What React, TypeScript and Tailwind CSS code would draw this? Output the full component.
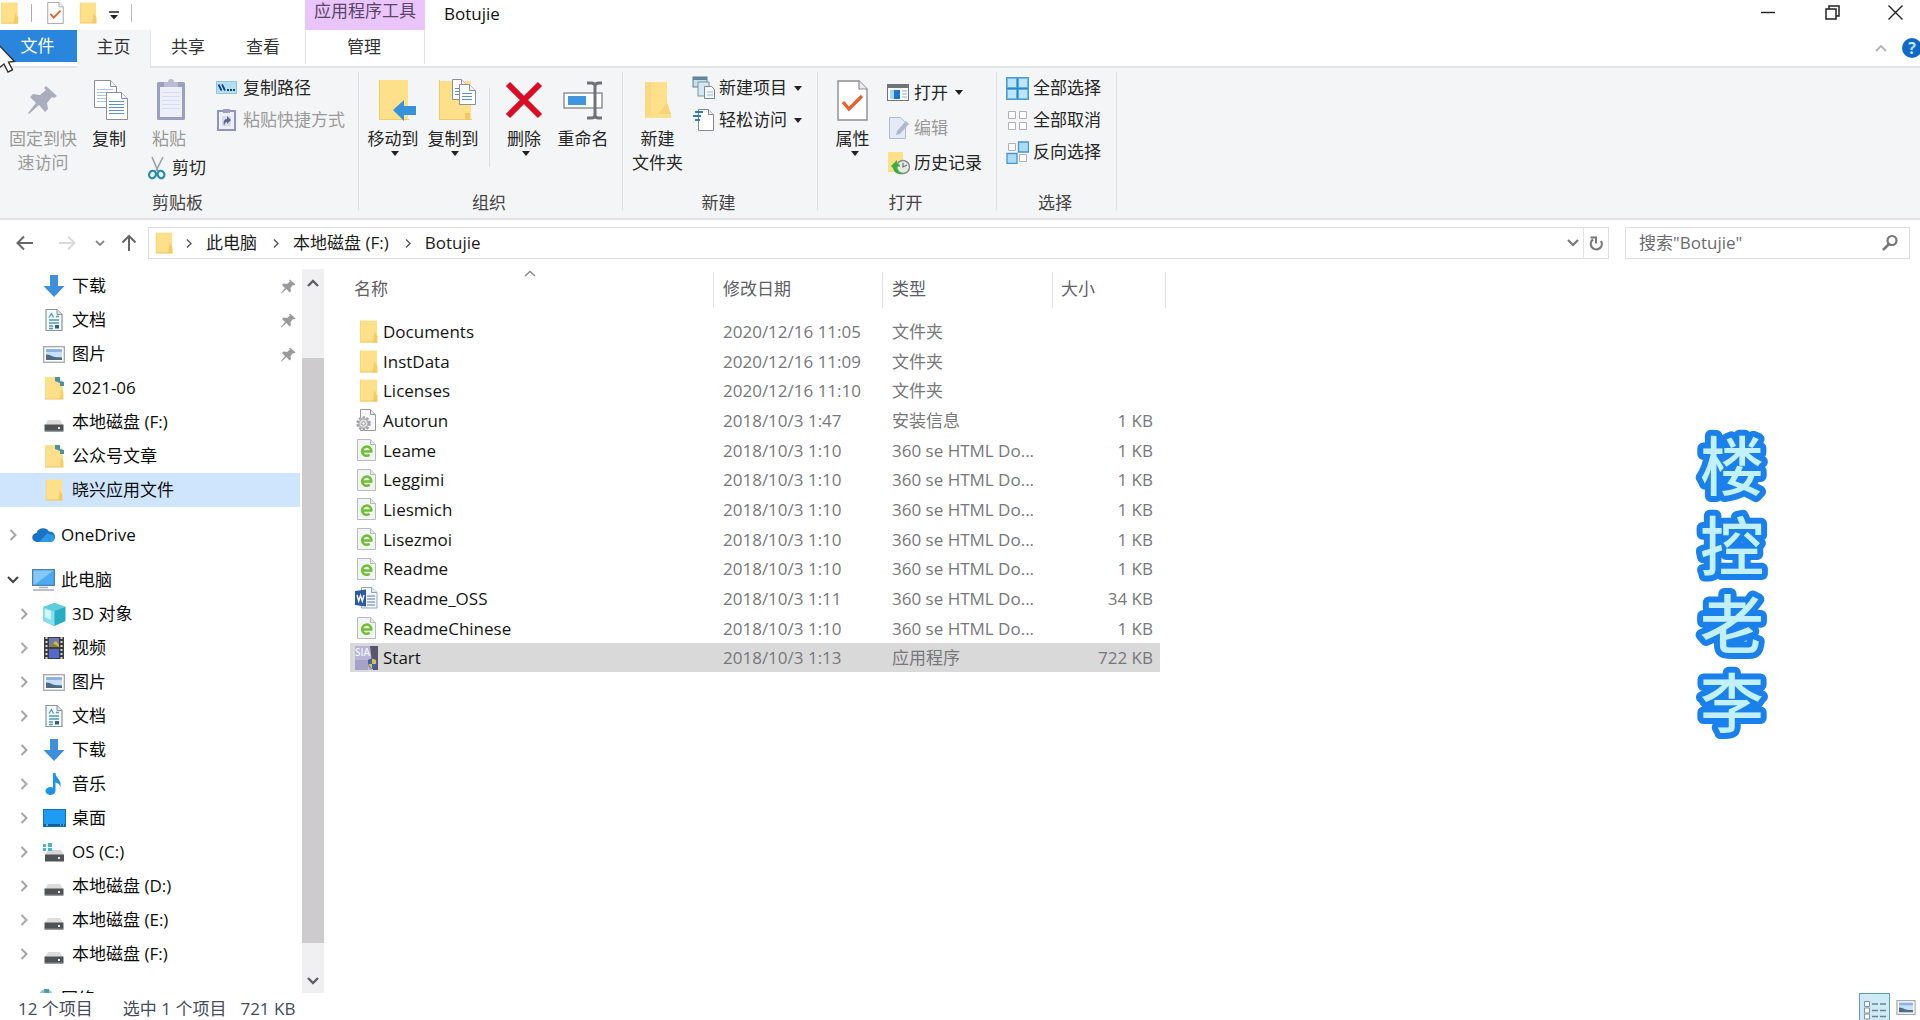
import React from "react";

type IconProps = { className?: string };

/* ---------- shared icons ---------- */

function Folder({ className = "w-5 h-6" }: IconProps) {
  return (
    <svg viewBox="0 0 20 24" className={className} aria-hidden="true">
      <path d="M1 0.5h18v13l0 10H1z" fill="#ffe08a" />
      <path d="M16 12l3.4 5v6.5H14.5z" fill="#f6cc62" />
      <path d="M1 23h18.4" stroke="#ecc35c" strokeWidth="1" />
      <path d="M1.5 0.5v23" stroke="#f7d47a" strokeWidth="1" />
    </svg>
  );
}

function FolderDoc() {
  return (
    <svg viewBox="0 0 20 24" className="w-5 h-6" aria-hidden="true">
      <path d="M1 1h11l7 9v13H1z" fill="#ffe08a" />
      <path d="M1 23h18.4" stroke="#ecc35c" />
      <path d="M17 13l2.4 4v6H16z" fill="#f6cc62" />
      <path d="M11 1h4l4 4v5z" fill="#dce9f0" />
      <path d="M11 1h5v4l4 1v4h-4V7l-5-2z" fill="#4f8fa3" />
    </svg>
  );
}

function CheckDoc({ className = "w-[31px] h-[41px]" }: IconProps) {
  return (
    <svg viewBox="0 0 31 41" className={className} aria-hidden="true">
      <path d="M1 1h21l8 8v31H1z" fill="#fff" stroke="#8d8d92" strokeWidth="1.4" />
      <path d="M22 1v8h8" fill="#eee" stroke="#8d8d92" strokeWidth="1.2" />
      <path d="M6 22l6 7L25 16" fill="none" stroke="#e8622c" strokeWidth="3.4" />
    </svg>
  );
}

function Caret() {
  return (
    <svg viewBox="0 0 8 5" className="w-2 h-[5px] shrink-0" aria-hidden="true">
      <path d="M0 0h8L4 5z" fill="#222" />
    </svg>
  );
}

function Pin({ className = "w-[15px] h-[15px]", color = "#9a9a9e" }: IconProps & { color?: string }) {
  return (
    <svg viewBox="0 0 30 30" className={className} aria-hidden="true">
      <path d="M18 1l11 10-3 2-2-1-5 6 1 6-3 3-6-7-10 9-1-1 8-10-6-6 3-3 7 1 6-5-2-2z" fill={color} />
    </svg>
  );
}

function Chevron({ open = false }: { open?: boolean }) {
  return open ? (
    <svg viewBox="0 0 12 8" className="w-3 h-2" aria-hidden="true">
      <path d="M1 1l5 5 5-5" fill="none" stroke="#444" strokeWidth="2.2" />
    </svg>
  ) : (
    <svg viewBox="0 0 8 12" className="w-2 h-3" aria-hidden="true">
      <path d="M1.5 1l5 5-5 5" fill="none" stroke="#a6a6a8" strokeWidth="2" />
    </svg>
  );
}

/* ---------- ribbon icons ---------- */

function Sheet({ x, y, w = 20, h = 26, line = "#5b8fd0" }: { x: number; y: number; w?: number; h?: number; line?: string }) {
  const rows = [9, 12, 15, 18, 21];
  return (
    <g transform={`translate(${x} ${y})`}>
      <path d={`M.5 .5h${w - 6}l6 6v${h - 7}h-${w}z`} fill="#fff" stroke="#8a8f9a" />
      <path d={`M${w - 5.5} .5v6h6`} fill="#eef" stroke="#8a8f9a" />
      {rows.filter((r) => r < h - 3).map((r) => (
        <path key={r} d={`M3 ${r}.5h${w - 6}`} stroke={line} />
      ))}
    </g>
  );
}

function CopyIcon() {
  return (
    <svg viewBox="0 0 36 42" className="ml-[3px] w-9 h-[42px]" aria-hidden="true">
      <Sheet x={1} y={1} w={22} h={28} line="#a9c4e6" />
      <Sheet x={13} y={13} w={21} h={28} />
    </svg>
  );
}

function PasteIcon() {
  return (
    <svg viewBox="0 0 30 42" className="ml-[3px] w-[30px] h-[42px]" aria-hidden="true">
      <rect x="1" y="3" width="28" height="38" rx="1.5" fill="#9c9fc0" />
      <rect x="4" y="8" width="22" height="30" fill="#edf0fb" />
      <path d="M8 3h4a3 3 0 016 0h4v5H8z" fill="#b9bcd2" />
      <path d="M6 13.500h18M6 17.500h18M6 21.500h18M6 25.500h18M6 29.500h18" stroke="#d5dcf3" />
    </svg>
  );
}

function CutIcon() {
  return (
    <svg viewBox="0 0 18 24" className="w-[18px] h-6" aria-hidden="true">
      <path d="M4 1l6 14M15 1L8 15" stroke="#9b9ea3" strokeWidth="1.600" fill="none" />
      <ellipse cx="4.500" cy="18.500" rx="3.300" ry="3.800" fill="#e9f6fb" stroke="#2589ad" strokeWidth="2.200" transform="rotate(25 4.500 18.500)" />
      <ellipse cx="13" cy="18.500" rx="3.300" ry="3.800" fill="#e9f6fb" stroke="#2589ad" strokeWidth="2.200" transform="rotate(-25 13 18.500)" />
    </svg>
  );
}

function PathIcon() {
  return (
    <svg viewBox="0 0 22 14" className="w-[22px] h-[14px]" aria-hidden="true">
      <rect x="0.500" y="0.500" width="20" height="12" fill="#b5def3" stroke="#8fc6e4" />
      <path d="M2.500 3.500l3 6M6 3.500l3 6" stroke="#16466b" strokeWidth="1.800" />
      <path d="M11 9h2M14 9h2M17 9h2" stroke="#16466b" strokeWidth="1.800" />
    </svg>
  );
}

function PasteLinkIcon() {
  return (
    <svg viewBox="0 0 22 24" className="w-[22px] h-6" aria-hidden="true">
      <rect x="2" y="3" width="17" height="19" fill="#eef0fb" stroke="#9194b8" strokeWidth="2" />
      <rect x="7" y="1" width="7" height="4" fill="#9da0bd" />
      <rect x="6" y="8" width="9" height="10" fill="#d9dcf0" />
      <path d="M8 18c-1-5 0-7 3-7V8l4 4-4 4v-2c-2 0-2 1-3 4z" fill="#62668f" />
    </svg>
  );
}

function MoveToIcon() {
  return (
    <svg viewBox="0 0 38 42" className="ml-2 w-[38px] h-[42px]" aria-hidden="true">
      <path d="M1 1h29v40H1z" fill="#ffe08a" />
      <path d="M1 40.500h30M1.500 1v40" stroke="#efcb6a" />
      <path d="M15 31l11-10v6h12v9H26v6z" fill="#3792dc" />
    </svg>
  );
}

function CopyToIcon() {
  return (
    <svg viewBox="0 0 38 42" className="ml-2 w-[38px] h-[42px]" aria-hidden="true">
      <path d="M1 2h32v39H1z" fill="#ffe08a" />
      <path d="M1 40.500h33M1.500 1v40" stroke="#efcb6a" />
      <path d="M27 34h5v7h-5z" fill="#f3c95f" />
      <Sheet x={14} y={0} w={15} h={21} />
      <Sheet x={21} y={5} w={16} h={21} />
    </svg>
  );
}

function DeleteIcon() {
  return (
    <svg viewBox="0 0 38 42" className="w-[38px] h-[42px]" aria-hidden="true">
      <path d="M3 5l32 32M35 5L3 37" stroke="#dc0a24" strokeWidth="6" fill="none" />
    </svg>
  );
}

function RenameIcon() {
  return (
    <svg viewBox="0 0 40 42" className="w-10 h-[42px]" aria-hidden="true">
      <rect x="1" y="14" width="38" height="15" fill="#fff" stroke="#8e9196" strokeWidth="1.500" />
      <rect x="5" y="17" width="18" height="9" fill="#3f95de" />
      <path d="M24 4h4q4 0 4 3 0-3 4-3h3M32 7v29M24 39h4q4 0 4-3 0 3 4 3h3" fill="none" stroke="#6f7276" strokeWidth="3" />
    </svg>
  );
}

function NewFolderIcon() {
  return (
    <svg viewBox="0 0 28 38" className="w-7 h-[38px]" aria-hidden="true">
      <path d="M1 1h22v21l4 11v4H1z" fill="#ffe08a" />
      <path d="M1 1v36l6-3V1z" fill="#f9d983" />
      <path d="M23 22l4 11H14z" fill="#f8d378" />
    </svg>
  );
}

function NewItemIcon() {
  return (
    <svg viewBox="0 0 24 24" className="w-6 h-6" aria-hidden="true">
      <rect x="1" y="1" width="14" height="10" fill="#c7e2e6" stroke="#5f7f8c" />
      <path d="M1 1h14v3H1z" fill="#5f8795" />
      <rect x="6" y="6" width="11" height="14" fill="#d4e7f5" stroke="#7f93a3" />
      <path d="M12.500 10.500h7l3 3v9h-10z" fill="#f5f8fc" stroke="#7d8592" />
      <path d="M15 16h6M15 19h6" stroke="#a8b7cc" />
    </svg>
  );
}

function EasyAccessIcon() {
  return (
    <svg viewBox="0 0 24 24" className="w-6 h-6" aria-hidden="true">
      <path d="M6.500 1.500h10l5 5v16h-15z" fill="#fff" stroke="#83888f" />
      <path d="M16.500 1.500v5h5" fill="#e8eef4" stroke="#83888f" />
      <path d="M3 4h8M1 8h8M3 12h5" stroke="#2f7ac0" strokeWidth="1.800" />
    </svg>
  );
}

function OpenIcon() {
  return (
    <svg viewBox="0 0 23 18" className="w-[23px] h-[18px]" aria-hidden="true">
      <rect x="0.500" y="0.500" width="21" height="16" fill="#fff" stroke="#6f747b" />
      <path d="M0 0h22v4H0z" fill="#6f747b" />
      <rect x="3" y="6" width="9" height="9" fill="#a9d6f5" />
      <rect x="7" y="6" width="6" height="9" fill="#1a76cc" />
      <path d="M15 7h5M15 10h5M15 13h5" stroke="#8eaed0" strokeWidth="1.200" />
    </svg>
  );
}

function EditIcon() {
  return (
    <svg viewBox="0 0 23 24" className="w-[23px] h-6" aria-hidden="true">
      <path d="M2.500 1.500h11l5 5v16h-16z" fill="#e6eaf8" stroke="#b3b9d2" />
      <path d="M19 5l3 3-9 10-4 1 1-4z" fill="#b1b7cf" />
    </svg>
  );
}

function HistoryIcon() {
  return (
    <svg viewBox="0 0 23 24" className="w-[23px] h-6" aria-hidden="true">
      <path d="M1 1h15v20H1z" fill="#ffe08a" />
      <circle cx="16" cy="16" r="6.500" fill="#e3ebe3" stroke="#8b908b" strokeWidth="1.500" />
      <path d="M16 12v4l4-2" stroke="#777" fill="none" strokeWidth="1.300" />
      <path d="M4 15l6-6v4c3 0 3 1 3 3-2-1-3 0-3 1 1 4 4 5 7 6-6 1-10-1-11-6z" fill="#3daf3f" />
    </svg>
  );
}

function SelectAllIcon() {
  return (
    <svg viewBox="0 0 23 23" className="w-[23px] h-[23px]" aria-hidden="true">
      <rect x="0.500" y="0.500" width="22" height="22" fill="#6cb9ea" stroke="#4a9bd0" />
      <path d="M2 2h8v8H2zM13 2h8v8h-8zM2 13h8v8H2zM13 13h8v8h-8z" fill="#bce6fb" />
      <path d="M11.500 1v21M1 11.500h21" stroke="#2c85c8" strokeWidth="1.500" />
    </svg>
  );
}

function SelectNoneIcon() {
  return (
    <svg viewBox="0 0 23 23" className="w-[23px] h-[23px]" aria-hidden="true">
      <path d="M2.500 2.500h7v7h-7zM13.500 2.500h7v7h-7zM2.500 13.500h7v7h-7zM13.500 13.500h7v7h-7z" fill="#fff" stroke="#b0b0b4" />
    </svg>
  );
}

function InvertIcon() {
  return (
    <svg viewBox="0 0 23 23" className="w-[23px] h-[23px]" aria-hidden="true">
      <path d="M2.500 2.500h7v7h-7zM13.500 13.500h7v7h-7z" fill="#fff" stroke="#b0b0b4" />
      <path d="M12.500 1h10v10h-10zM1 12.500h10v10h-10z" fill="#a9dcf8" stroke="#4796c4" strokeWidth="1.300" />
    </svg>
  );
}

/* ---------- navigation icons ---------- */

function DownloadIcon() {
  return (
    <svg viewBox="0 0 22 24" className="w-[22px] h-6" aria-hidden="true">
      <path d="M7 1h8v11h6.500L11 23 .5 12H7z" fill="#3b8fdc" />
    </svg>
  );
}

function DocumentIcon() {
  return (
    <svg viewBox="0 0 18 24" className="w-[18px] h-6" aria-hidden="true">
      <path d="M1 1.500h11l5 5v16H1z" fill="#f5fafb" stroke="#8b9498" strokeWidth="1.200" />
      <path d="M12 1.500v5h5" fill="#dde5e8" stroke="#8b9498" />
      <path d="M4 9.500l2.500-4 2 4M11 8.500h3M4 12h10M4 15h10M4 18h4M4 20.500h4" stroke="#4f9db4" strokeWidth="1.300" fill="none" />
      <rect x="10" y="17" width="4" height="3.500" fill="#2b6478" />
    </svg>
  );
}

function PictureIcon({ className = "w-[22px] h-[17px]" }: IconProps) {
  return (
    <svg viewBox="0 0 22 17" className={className} aria-hidden="true">
      <rect x="0.700" y="0.700" width="20.600" height="15.600" fill="#fff" stroke="#a3a7ac" strokeWidth="1.300" />
      <rect x="3" y="3" width="16" height="11" fill="#c6e1f6" />
      <path d="M3 3h16v3H3z" fill="#8fb3e4" />
      <path d="M3 8.500c4 0 6 2 9 2.500s5 0 7 .5V14H3z" fill="#4f6b80" />
    </svg>
  );
}

function DriveIcon() {
  return (
    <svg viewBox="0 0 20 24" className="w-5 h-6" aria-hidden="true">
      <path d="M4 10h12l3 5H1z" fill="#dcdcdc" />
      <rect x="0.500" y="14.500" width="19" height="7" fill="#505355" />
      <path d="M1 21h18" stroke="#8b8d8f" />
      <rect x="14" y="17" width="2" height="2" fill="#e9e9e9" />
    </svg>
  );
}

function OsDriveIcon() {
  return (
    <svg viewBox="0 0 22 24" className="w-[22px] h-6" aria-hidden="true">
      <path d="M5 10h13l3 5H2z" fill="#d6d6d6" />
      <rect x="2" y="14.500" width="19" height="7" fill="#505355" />
      <rect x="15" y="17" width="2" height="2" fill="#e9e9e9" />
      <path d="M0 4h3v3H0zM5 3h4v4H5zM0 8h3v3H0zM5 8h4v3H5z" fill="#45b9c2" />
    </svg>
  );
}

function CloudIcon() {
  return (
    <svg viewBox="0 0 23 16" className="w-[23px] h-4" aria-hidden="true">
      <path d="M5 15a4.500 4.500 0 01-.5-9A7 7 0 0117 4.500 5.300 5.300 0 0118.500 15z" fill="#1a74c6" />
      <path d="M7 15h11.500a4 4 0 002.500-7l-6-1.500z" fill="#2c9ae8" />
    </svg>
  );
}

function ComputerIcon() {
  return (
    <svg viewBox="0 0 23 22" className="w-[23px] h-[22px]" aria-hidden="true">
      <rect x="0.600" y="0.600" width="21.800" height="15.800" fill="#4cabf0" stroke="#507ea6" strokeWidth="1.200" />
      <path d="M1.500 1.500h20L3 15.500H1.500z" fill="#83c8f8" />
      <path d="M7 18.500h9M1 21h21" stroke="#a7adb8" strokeWidth="1.500" />
    </svg>
  );
}

function CubeIcon() {
  return (
    <svg viewBox="0 0 23 23" className="w-[23px] h-[23px]" aria-hidden="true">
      <path d="M11.500 0L22.500 4v14l-11 5-11-5V4z" fill="#26adc4" />
      <path d="M.5 4l11 4v15l-11-5z" fill="#86dfe9" />
      <path d="M2 6l6 2v9l-6-3z" fill="#d6f4f6" />
      <path d="M.5 4l11-4 11 4-11 4z" fill="#5fcfdd" />
    </svg>
  );
}

function VideoIcon() {
  return (
    <svg viewBox="0 0 20 22" className="w-5 h-[22px]" aria-hidden="true">
      <rect width="20" height="22" fill="#3d3c3c" />
      <path d="M2.500 0v22M17.500 0v22" stroke="#d8d6cf" strokeWidth="2" strokeDasharray="2 2" />
      <rect x="5" y="1" width="10" height="9" fill="#6e78b2" />
      <path d="M5 10l5-5 5 5z" fill="#86892f" />
      <rect x="5" y="12" width="10" height="9" fill="#5468cf" />
      <path d="M9 6l3-2 3 4v2z" fill="#cfb94a" />
    </svg>
  );
}

function MusicIcon() {
  return (
    <svg viewBox="0 0 18 24" className="w-[18px] h-6" aria-hidden="true">
      <path d="M8 1h2.500c0 5 6 6 5 14-1-3-3-4-5-4.500V19a5 4 0 11-2.500-3.500z" fill="#1f93ea" />
    </svg>
  );
}

function DesktopIcon() {
  return (
    <svg viewBox="0 0 23 18" className="w-[23px] h-[18px]" aria-hidden="true">
      <rect x="0.500" y="0.500" width="22" height="17" fill="#1f9bf4" stroke="#1670b8" />
      <path d="M1 16h21" stroke="#0f5f9e" strokeWidth="2" />
      <path d="M3 16h2M17 16h1M20 16h1" stroke="#cdeaff" />
    </svg>
  );
}

function NetworkIcon() {
  return (
    <svg viewBox="0 0 23 22" className="w-[23px] h-[22px]" aria-hidden="true">
      <circle cx="14" cy="8" r="7" fill="#8ccbd0" />
      <path d="M12 1h5v8h-5z" fill="#5a9aa1" />
      <rect x="1" y="9" width="15" height="10" fill="#4cabf0" />
    </svg>
  );
}

/* ---------- file icons ---------- */

function InfIcon() {
  return (
    <svg viewBox="0 0 21 24" className="w-[21px] h-6" aria-hidden="true">
      <path d="M4.500 1.500h10l5 5v16h-15z" fill="#f8f8fa" stroke="#9a9a9e" />
      <path d="M14.500 1.500v5h5" fill="#e5e5e8" stroke="#9a9a9e" />
      <circle cx="7.500" cy="15.500" r="6" fill="#e2e2e4" stroke="#a2a2a5" strokeWidth="2.400" strokeDasharray="2.400 1.400" />
      <circle cx="7.500" cy="15.500" r="4.600" fill="#dededf" stroke="#a2a2a5" />
      <circle cx="7.500" cy="15.500" r="1.800" fill="#f8f8f8" stroke="#98989b" />
    </svg>
  );
}

function HtmlIcon() {
  return (
    <svg viewBox="0 0 21 24" className="w-[21px] h-6" aria-hidden="true">
      <path d="M1.500 1.500h13l5 5v16h-18z" fill="#f3f5f4" stroke="#b6bcb9" />
      <path d="M14.500 1.500v5h5" fill="#e0e6e2" stroke="#b6bcb9" />
      <path d="M6.500 13.500H15.300A4.600 4.600 0 1 0 13.600 16.800" fill="none" stroke="#6fbf35" strokeWidth="2.500" />
    </svg>
  );
}

function WordIcon() {
  return (
    <svg viewBox="0 0 23 24" className="w-[23px] h-6" aria-hidden="true">
      <path d="M6.500 1.500h10l5.500 5v15.500H6.500z" fill="#f5f8fc" stroke="#8fa3c2" />
      <path d="M16.500 1.500v5h5.500" fill="#dfe8f3" stroke="#8fa3c2" />
      <path d="M12 10h8M12 13h8M12 16h8M12 19h8" stroke="#8ba5cf" strokeWidth="1.400" />
      <path d="M0 5l11-1.500v17L0 19z" fill="#2c5aa0" />
      <path d="M2 9l1.700 6L5.500 9.500 7.300 15 9 9" fill="none" stroke="#fff" strokeWidth="1.400" />
    </svg>
  );
}

function SiaIcon() {
  return (
    <svg viewBox="0 0 23 24" className="w-[23px] h-6" aria-hidden="true">
      <rect width="23" height="24" fill="#b9b5d2" />
      <path d="M15 0h8v24h-5z" fill="#56556c" />
      <path d="M0 14h13v10H0z" fill="#a6a2c6" />
      <text x="0" y="10" fontSize="10" fill="#f4f2fb" fontWeight="600">SIA</text>
      <path d="M13 14l4-2 5 2v4q-1 4-5 5-3-1-4-5z" fill="#3b66a8" />
      <path d="M17 12.500l4 1.500v4h-4zM13.500 18H17v4.500q-2.500-1-3.500-4.500z" fill="#e3b748" />
    </svg>
  );
}

/* ---------- ribbon building blocks ---------- */

function BigButton({ icon, lines, width, caret, muted }: { icon: React.ReactNode; lines: string[]; width: string; caret?: boolean; muted?: boolean }) {
  return (
    <button type="button" className={`flex shrink-0 flex-col items-center ${width} ${muted ? "text-[#9a9a9a]" : "text-[#262626]"}`}>
      <span className="flex h-[42px] items-center">{icon}</span>
      <span className="mt-[6px] leading-6 whitespace-nowrap">
        {lines.map((l) => (
          <span key={l} className="block">{l}</span>
        ))}
      </span>
      {caret && <span className="ml-1 flex"><Caret /></span>}
    </button>
  );
}

function SmallButton({ icon, label, caret, muted, height = "h-8" }: { icon: React.ReactNode; label: string; caret?: boolean; muted?: boolean; height?: string }) {
  return (
    <button type="button" className={`flex items-center gap-[3px] whitespace-nowrap ${height} ${muted ? "text-[#9a9a9a]" : "text-[#262626]"}`}>
      <span className="flex w-6 justify-start">{icon}</span>
      <span>{label}</span>
      {caret && <span className="ml-1 flex"><Caret /></span>}
    </button>
  );
}

function Group({ label, width, children }: { label: string; width: string; children: React.ReactNode }) {
  return (
    <section aria-label={label} className={`flex shrink-0 flex-col pb-[3px] ${width}`}>
      <div className="flex flex-1">{children}</div>
      <h2 className="pr-[3px] text-center leading-6 text-[#444]">{label}</h2>
    </section>
  );
}

function Divider() {
  return <div className="mt-1 mb-2 w-px shrink-0 bg-[#e0e0e3]" />;
}

function Ribbon() {
  return (
    <div className="flex h-[152px] shrink-0 border-b-2 border-[#e2e2e4] bg-[#f4f5f6]">
      <Group label="剪贴板" width="w-[358px]">
        <div className="flex pt-[11px]">
          <BigButton width="w-[86px]" muted lines={["固定到快", "速访问"]} icon={<Pin className="w-[30px] h-[30px]" color="#a9adbf" />} />
          <BigButton width="w-[46px]" lines={["复制"]} icon={<CopyIcon />} />
          <div className="ml-4 flex w-[68px] flex-col items-start">
            <BigButton width="w-[42px]" muted lines={["粘贴"]} icon={<PasteIcon />} />
            <button type="button" className="mt-[5px] flex h-6 items-center gap-[6px] text-[#262626]">
              <CutIcon />
              <span>剪切</span>
            </button>
          </div>
        </div>
        <div className="pt-1">
          <SmallButton icon={<PathIcon />} label="复制路径" />
          <SmallButton icon={<PasteLinkIcon />} label="粘贴快捷方式" muted />
        </div>
      </Group>
      <Divider />
      <Group label="组织" width="w-[263px]">
        <div className="flex pt-[11px] pl-1">
          <BigButton width="w-[60px]" lines={["移动到"]} caret icon={<MoveToIcon />} />
          <BigButton width="w-[60px]" lines={["复制到"]} caret icon={<CopyToIcon />} />
        </div>
        <div className="mx-[6px] mt-5 mb-6 w-px bg-[#dedee1]" />
        <div className="flex pt-[11px]">
          <BigButton width="w-[56px]" lines={["删除"]} caret icon={<DeleteIcon />} />
          <BigButton width="w-[62px]" lines={["重命名"]} icon={<RenameIcon />} />
        </div>
      </Group>
      <Divider />
      <Group label="新建" width="w-[194px]">
        <div className="flex pt-[11px] pl-1">
          <BigButton width="w-[61px]" lines={["新建", "文件夹"]} icon={<NewFolderIcon />} />
        </div>
        <div className="pt-1 pl-1">
          <SmallButton icon={<NewItemIcon />} label="新建项目" caret />
          <SmallButton icon={<EasyAccessIcon />} label="轻松访问" caret />
        </div>
      </Group>
      <Divider />
      <Group label="打开" width="w-[178px]">
        <div className="flex pt-[11px] pl-1">
          <BigButton width="w-[61px]" lines={["属性"]} caret icon={<CheckDoc />} />
        </div>
        <div className="pt-[7px] pl-1">
          <SmallButton height="h-[35px]" icon={<OpenIcon />} label="打开" caret />
          <SmallButton height="h-[35px]" icon={<EditIcon />} label="编辑" muted />
          <SmallButton height="h-[35px]" icon={<HistoryIcon />} label="历史记录" />
        </div>
      </Group>
      <Divider />
      <Group label="选择" width="w-[119px]">
        <div className="pt-1 pl-[9px]">
          <SmallButton icon={<SelectAllIcon />} label="全部选择" />
          <SmallButton icon={<SelectNoneIcon />} label="全部取消" />
          <SmallButton icon={<InvertIcon />} label="反向选择" />
        </div>
      </Group>
      <Divider />
    </div>
  );
}

/* ---------- title bar and tabs ---------- */

function TitleBar() {
  return (
    <header className="flex h-[30px] shrink-0 bg-white">
      <div className="flex w-[305px] items-center pb-1">
        <Folder className="w-[19px] h-[22px]" />
        <span className="ml-3 h-[18px] w-px bg-[#b9a9a9]" />
        <button type="button" aria-label="属性" className="ml-[15px]"><CheckDoc className="w-[17px] h-[22px]" /></button>
        <button type="button" aria-label="新建文件夹" className="ml-[15px]"><Folder className="w-[18px] h-[22px]" /></button>
        <button type="button" aria-label="自定义快速访问工具栏" className="ml-3 mt-1">
          <svg viewBox="0 0 10 9" className="w-[10px] h-[9px]" aria-hidden="true">
            <path d="M0 1h10" stroke="#222" strokeWidth="1.500" />
            <path d="M1 4h8L5 8.500z" fill="#222" />
          </svg>
        </button>
        <span className="ml-3 h-[18px] w-px bg-[#b9b9b9]" />
      </div>
      <div className="w-[120px] bg-[#e9c5fb] text-center leading-[22px] text-[#5b4468]">应用程序工具</div>
      <h1 className="ml-[19px] flex-1 leading-7 text-[#111]">Botujie</h1>
      <div className="flex items-start">
        <button type="button" aria-label="最小化" className="flex h-6 w-16 items-center justify-center">
          <svg viewBox="0 0 15 15" className="w-[15px] h-[15px]" aria-hidden="true"><path d="M0 7.500h14" stroke="#222" strokeWidth="1.400" /></svg>
        </button>
        <button type="button" aria-label="还原" className="flex h-6 w-16 items-center justify-center">
          <svg viewBox="0 0 15 15" className="w-[15px] h-[15px]" aria-hidden="true">
            <path d="M1 4h10v10H1zM4 4V1h10v10h-3" fill="none" stroke="#222" strokeWidth="1.500" />
          </svg>
        </button>
        <button type="button" aria-label="关闭" className="flex h-6 w-14 items-center justify-center pl-[6px]">
          <svg viewBox="0 0 15 15" className="w-[15px] h-[15px]" aria-hidden="true"><path d="M.5 .5l14 14M14.500 .5l-14 14" stroke="#222" strokeWidth="1.400" /></svg>
        </button>
      </div>
    </header>
  );
}

function Tabs() {
  return (
    <nav aria-label="功能区" className="flex h-[38px] shrink-0 items-start border-b-2 border-[#e4e4e6] text-[#333]">
      <button type="button" className="h-8 w-[77px] bg-[#2a86dc] pr-[2px] text-white">文件</button>
      <button type="button" className="h-[38px] w-[74px] border-r border-[#e4e4e6] bg-[#f4f5f6] pb-1">主页</button>
      <button type="button" className="h-[34px] w-[74px]">共享</button>
      <button type="button" className="h-[34px] w-[80px] pr-1">查看</button>
      <button type="button" className="h-[34px] w-[120px] border-x border-[#ecd9f2] pr-[2px]">管理</button>
      <div className="flex flex-1 items-center justify-end self-stretch overflow-hidden">
        <button type="button" aria-label="最小化功能区" className="mr-[15px]">
          <svg viewBox="0 0 12 8" className="w-3 h-2" aria-hidden="true"><path d="M1 7l5-5 5 5" fill="none" stroke="#b4b4b8" strokeWidth="1.800" /></svg>
        </button>
        <button type="button" aria-label="帮助" className="-mr-[2px] flex h-5 w-5 items-center justify-center rounded-full bg-[#1268c4] text-[16px] leading-5 font-bold text-[#bfe4ff]">?</button>
      </div>
    </nav>
  );
}

/* ---------- address bar ---------- */

function AddressBar() {
  const crumbs = ["此电脑", "本地磁盘 (F:)", "Botujie"];
  return (
    <div className="flex h-12 shrink-0 items-center pt-[2px] pr-[10px] pb-1">
      <div className="flex w-[148px] items-center">
        <button type="button" aria-label="后退" className="ml-4">
          <svg viewBox="0 0 18 16" className="w-[18px] h-4" aria-hidden="true"><path d="M17 8H2M8 1.500L1.500 8 8 14.500" fill="none" stroke="#666" strokeWidth="2" /></svg>
        </button>
        <button type="button" aria-label="前进" className="ml-6">
          <svg viewBox="0 0 18 16" className="w-[18px] h-4" aria-hidden="true"><path d="M1 8h15M10 1.500L16.500 8 10 14.500" fill="none" stroke="#dadadc" strokeWidth="2" /></svg>
        </button>
        <button type="button" aria-label="最近浏览的位置" className="ml-[19px]">
          <svg viewBox="0 0 10 7" className="w-[10px] h-[7px]" aria-hidden="true"><path d="M1 1l4 4 4-4" fill="none" stroke="#888" strokeWidth="1.800" /></svg>
        </button>
        <button type="button" aria-label="上移" className="ml-4">
          <svg viewBox="0 0 16 18" className="w-4 h-[18px]" aria-hidden="true"><path d="M8 17V2M1.500 8.500L8 2l6.500 6.500" fill="none" stroke="#666" strokeWidth="2" /></svg>
        </button>
      </div>
      <div className="flex h-8 flex-1 items-center border border-[#dfdce1]">
        <span className="ml-[6px] flex w-5"><Folder className="w-[18px] h-[22px]" /></span>
        {crumbs.map((c) => (
          <React.Fragment key={c}>
            <span className="ml-[10px] flex w-[21px] justify-start pl-px">
              <svg viewBox="0 0 6 9" className="w-[6px] h-[9px]" aria-hidden="true"><path d="M1 .5l4 4-4 4" fill="none" stroke="#555" strokeWidth="1.400" /></svg>
            </span>
            <button type="button" className="mr-[5px] text-[#1c1c1c]">{c}</button>
          </React.Fragment>
        ))}
        <button type="button" aria-label="以前的位置" className="mr-1 ml-auto">
          <svg viewBox="0 0 12 8" className="w-3 h-2" aria-hidden="true"><path d="M1 1l5 5 5-5" fill="none" stroke="#777" strokeWidth="2.200" /></svg>
        </button>
        <button type="button" aria-label="刷新" className="flex h-full w-[25px] items-center justify-center border-l border-[#e4e2e6]">
          <svg viewBox="0 0 16 17" className="w-4 h-[17px]" aria-hidden="true">
            <path d="M5 4.500A5.500 5.500 0 1 0 13 6" fill="none" stroke="#77777b" strokeWidth="2.200" />
            <path d="M2.500 2.500H8v6" fill="none" stroke="#77777b" strokeWidth="2" />
          </svg>
        </button>
      </div>
      <label className="ml-4 flex h-8 w-[285px] items-center border border-[#dfdce1] pr-[10px] pl-[13px]">
        <input type="text" aria-label="搜索" placeholder={'搜索"Botujie"'} className="min-w-0 flex-1 bg-transparent outline-none placeholder:text-[#6b6b6f]" />
        <svg viewBox="0 0 18 18" className="w-[18px] h-[18px]" aria-hidden="true">
          <circle cx="11" cy="6.500" r="4.500" fill="none" stroke="#77777b" strokeWidth="2.200" />
          <path d="M8 10l-6 6" stroke="#77777b" strokeWidth="2.600" />
        </svg>
      </label>
    </div>
  );
}

/* ---------- navigation pane ---------- */

type NavEntry = { label: string; icon: React.ReactNode; pinned?: boolean; selected?: boolean };

const quickAccess: NavEntry[] = [
  { label: "下载", icon: <DownloadIcon />, pinned: true },
  { label: "文档", icon: <DocumentIcon />, pinned: true },
  { label: "图片", icon: <PictureIcon />, pinned: true },
  { label: "2021-06", icon: <FolderDoc /> },
  { label: "本地磁盘 (F:)", icon: <DriveIcon /> },
  { label: "公众号文章", icon: <FolderDoc /> },
  { label: "晓兴应用文件", icon: <Folder className="w-[18px] h-[22px]" />, selected: true },
];

const computer: NavEntry[] = [
  { label: "3D 对象", icon: <CubeIcon /> },
  { label: "视频", icon: <VideoIcon /> },
  { label: "图片", icon: <PictureIcon /> },
  { label: "文档", icon: <DocumentIcon /> },
  { label: "下载", icon: <DownloadIcon /> },
  { label: "音乐", icon: <MusicIcon /> },
  { label: "桌面", icon: <DesktopIcon /> },
  { label: "OS (C:)", icon: <OsDriveIcon /> },
  { label: "本地磁盘 (D:)", icon: <DriveIcon /> },
  { label: "本地磁盘 (E:)", icon: <DriveIcon /> },
  { label: "本地磁盘 (F:)", icon: <DriveIcon /> },
];

function NavRow({ label, icon, pinned, selected, expander, top, open }: NavEntry & { expander?: boolean; top?: boolean; open?: boolean }) {
  return (
    <li>
      <button type="button" className={`flex h-[34px] w-full items-center text-[#0d0d0d] ${selected ? "bg-[#cfe5fd]" : ""}`}>
        <span className={`flex w-[26px] justify-center ${top ? "" : "ml-[11px]"}`}>
          {expander && <Chevron open={open} />}
        </span>
        <span className="ml-[5px] flex w-6 justify-center">{icon}</span>
        <span className="ml-[6px] whitespace-nowrap">{label}</span>
        {pinned && <span className="mr-1 ml-auto"><Pin /></span>}
      </button>
    </li>
  );
}

function Sidebar() {
  return (
    <aside className="flex w-[324px] shrink-0 overflow-hidden pt-px">
      <nav aria-label="导航窗格" className="flex h-0 min-h-full flex-1 flex-col gap-[11px] overflow-hidden pr-[2px]">
        <ul>{quickAccess.map((e) => <NavRow key={e.label} {...e} />)}</ul>
        <ul><NavRow label="OneDrive" icon={<CloudIcon />} top expander /></ul>
        <ul>
          <NavRow label="此电脑" icon={<ComputerIcon />} top expander open />
          {computer.map((e) => <NavRow key={e.label} {...e} expander />)}
        </ul>
        <ul><NavRow label="网络" icon={<NetworkIcon />} top /></ul>
      </nav>
      <div className="flex w-[22px] flex-col bg-[#f0eff1]">
        <button type="button" aria-label="向上滚动" className="flex h-7 items-center justify-center">
          <svg viewBox="0 0 12 8" className="w-3 h-2" aria-hidden="true"><path d="M1 7l5-5 5 5" fill="none" stroke="#606064" strokeWidth="2.400" /></svg>
        </button>
        <div className="flex flex-1 flex-col pt-[61px] pb-[26px]">
          <div className="flex-1 bg-[#cdcbce]" />
        </div>
        <button type="button" aria-label="向下滚动" className="flex h-6 items-center justify-center">
          <svg viewBox="0 0 12 8" className="w-3 h-2" aria-hidden="true"><path d="M1 1l5 5 5-5" fill="none" stroke="#606064" strokeWidth="2.400" /></svg>
        </button>
      </div>
    </aside>
  );
}

/* ---------- file list ---------- */

type FileRow = { name: string; date: string; type: string; size: string; icon: React.ReactNode; selected?: boolean };

const html = "360 se HTML Do...";
const folderIcon = <Folder className="ml-1 w-[19px] h-[23px]" />;

const files: FileRow[] = [
  { name: "Documents", date: "2020/12/16 11:05", type: "文件夹", size: "", icon: folderIcon },
  { name: "InstData", date: "2020/12/16 11:09", type: "文件夹", size: "", icon: folderIcon },
  { name: "Licenses", date: "2020/12/16 11:10", type: "文件夹", size: "", icon: folderIcon },
  { name: "Autorun", date: "2018/10/3 1:47", type: "安装信息", size: "1 KB", icon: <InfIcon /> },
  { name: "Leame", date: "2018/10/3 1:10", type: html, size: "1 KB", icon: <HtmlIcon /> },
  { name: "Leggimi", date: "2018/10/3 1:10", type: html, size: "1 KB", icon: <HtmlIcon /> },
  { name: "Liesmich", date: "2018/10/3 1:10", type: html, size: "1 KB", icon: <HtmlIcon /> },
  { name: "Lisezmoi", date: "2018/10/3 1:10", type: html, size: "1 KB", icon: <HtmlIcon /> },
  { name: "Readme", date: "2018/10/3 1:10", type: html, size: "1 KB", icon: <HtmlIcon /> },
  { name: "Readme_OSS", date: "2018/10/3 1:11", type: html, size: "34 KB", icon: <WordIcon /> },
  { name: "ReadmeChinese", date: "2018/10/3 1:10", type: html, size: "1 KB", icon: <HtmlIcon /> },
  { name: "Start", date: "2018/10/3 1:13", type: "应用程序", size: "722 KB", icon: <SiaIcon />, selected: true },
];

function HeaderLine({ last }: { last?: boolean }) {
  return <span className={`absolute top-1 h-9 w-px bg-[#e2e0e8] ${last ? "-right-[6px]" : "right-0"}`} />;
}

function FileTable() {
  return (
    <table className="w-[810px] table-fixed border-collapse text-[#77777a]">
      <thead className="text-[#5d6066]">
        <tr className="h-12">
          <th scope="col" className="relative w-[364px] pb-[6px] pl-1 text-left font-normal">
            名称
            <svg viewBox="0 0 12 7" className="absolute top-[2px] left-[174px] h-[7px] w-3" aria-hidden="true"><path d="M1 6l5-4.500L11 6" fill="none" stroke="#888" strokeWidth="1.500" /></svg>
            <HeaderLine />
          </th>
          <th scope="col" className="relative w-[169px] pb-[6px] pl-[9px] text-left font-normal">修改日期<HeaderLine /></th>
          <th scope="col" className="relative w-[170px] pb-[6px] pl-[9px] text-left font-normal">类型<HeaderLine /></th>
          <th scope="col" className="relative pb-[6px] pl-2 text-left font-normal">大小<HeaderLine last /></th>
        </tr>
      </thead>
      <tbody>
        {files.map((f) => (
          <tr key={f.name} className={`h-[30px] leading-[29px] nth-[3n]:h-[29px] ${f.selected ? "bg-[#d9d9da]" : ""}`}>
            <td className="p-0 text-[#151515]">
              <span className="flex items-center pl-1">
                <span className="flex w-[25px] justify-center">{f.icon}</span>
                <span className="ml-1">{f.name}</span>
              </span>
            </td>
            <td className="p-0 pl-[9px] whitespace-nowrap">{f.date}</td>
            <td className="p-0 pl-[9px] whitespace-nowrap">{f.type}</td>
            <td className="p-0 pr-[7px] text-right whitespace-nowrap">{f.size}</td>
          </tr>
        ))}
      </tbody>
    </table>
  );
}

function Watermark() {
  return (
    <svg viewBox="0 0 90 330" className="pointer-events-none absolute top-[155px] right-[143px] h-[330px] w-[90px]" role="img" aria-label="楼控老李">
      <g fontSize="64" fontWeight="500" fill="#c2f1fd" stroke="#1a80ec" strokeWidth="12" strokeLinejoin="round" paintOrder="stroke" textAnchor="middle">
        <text x="45" y="67">楼</text>
        <text x="45" y="147">控</text>
        <text x="45" y="225">老</text>
        <text x="45" y="304">李</text>
      </g>
    </svg>
  );
}

function StatusBar() {
  return (
    <footer className="flex h-[27px] shrink-0 items-start bg-white leading-[31px] text-[#474b5c]">
      <span className="ml-[18px]">12 个项目</span>
      <span className="ml-[30px]">选中 1 个项目</span>
      <span className="ml-[14px]">721 KB</span>
      <div className="ml-auto flex items-start pr-1">
        <button type="button" aria-label="详细信息" className="flex h-[27px] w-[31px] justify-center border border-b-0 border-[#5e9fb2] bg-[#cdeaf6] pt-[6px]">
          <svg viewBox="0 0 24 20" className="w-6 h-5" aria-hidden="true">
            <path d="M1.500 1.500h5v5h-5zM1.500 8h5v5h-5zM1.500 14h5v5h-5z" fill="#fff" stroke="#8390a0" />
            <path d="M9 4h6M17 4h6M9 10.500h6M17 10.500h6M9 16.500h6M17 16.500h6" stroke="#74818e" strokeWidth="1.500" />
          </svg>
        </button>
        <button type="button" aria-label="大缩略图" className="mt-[7px] ml-[6px]">
          <PictureIcon className="w-5 h-[15px]" />
        </button>
      </div>
    </footer>
  );
}

function Pointer() {
  return (
    <svg viewBox="0 0 16 30" className="pointer-events-none absolute top-[44px] left-0 h-[30px] w-4" aria-hidden="true">
      <path d="M-6 -4L14.500 17.500 8.500 18l4 8-4.500 2-4-8-5 4z" fill="#fff" stroke="#333" strokeWidth="1.400" />
    </svg>
  );
}

export default function App() {
  return (
    <div className="relative flex h-screen flex-col overflow-hidden bg-white font-['Open_Sans','Noto_Sans_CJK_SC',sans-serif] text-[17px] leading-6">
      <TitleBar />
      <Tabs />
      <Ribbon />
      <AddressBar />
      <div className="flex min-h-0 flex-1">
        <Sidebar />
        <main className="relative min-w-0 flex-1 pl-[26px]">
          <FileTable />
          <Watermark />
        </main>
      </div>
      <StatusBar />
      <Pointer />
    </div>
  );
}
